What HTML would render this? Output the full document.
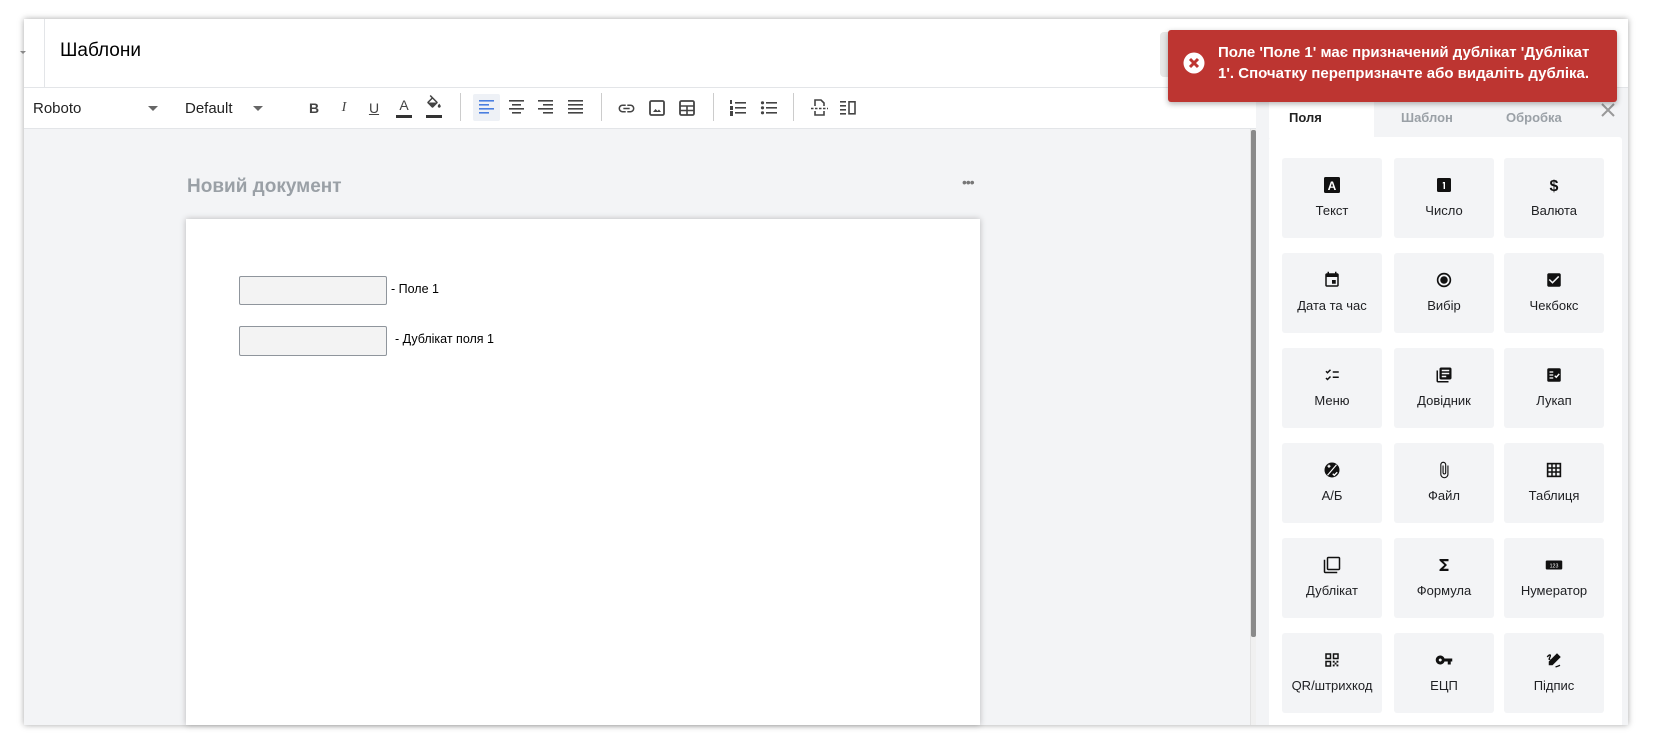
<!DOCTYPE html>
<html><head><meta charset="utf-8"><style>
*{box-sizing:border-box;margin:0;padding:0}
body{width:1654px;height:745px;background:#fff;font-family:"Liberation Sans","DejaVu Sans",sans-serif;position:relative;overflow:hidden;color:#202124}
.abs{position:absolute}
#frame{left:24px;top:19px;width:1604px;height:706px;background:#fff;box-shadow:0 0 6px rgba(0,0,0,.35);overflow:hidden}
.tb{position:absolute;top:99px;height:18px;display:flex;align-items:center;justify-content:center;width:20px;font-size:14px;color:#444}
.sep{position:absolute;top:93px;width:1px;height:28px;background:#ccc}
.tile{position:absolute;width:100px;height:80px;background:#f3f4f6;border-radius:3px;text-align:center}
.tile svg{position:absolute;left:41px;top:18px;width:18px;height:18px}
.tile span{position:absolute;left:0;right:0;top:45px;font-size:13px;color:#202124}
</style></head><body>
<div id="frame" class="abs"></div>
<!-- header -->
<div class="abs" style="left:24px;top:19px;width:1604px;height:69px;background:#fff;border-bottom:1px solid #e3e5e8"></div>
<div class="abs" style="left:20px;top:51px;width:0;height:0;border-left:3px solid transparent;border-right:3px solid transparent;border-top:3px solid #888"></div>
<div class="abs" style="left:44px;top:19px;width:1px;height:69px;background:#e3e5e8"></div>
<div class="abs" style="left:60px;top:40px;font-size:19px;color:#000">Шаблони</div>
<div class="abs" style="left:1160px;top:32px;width:70px;height:45px;background:#e8e8e8;border-radius:4px"></div>
<!-- toolbar -->
<div class="abs" style="left:24px;top:88px;width:1232px;height:41px;background:#fff;border-bottom:1px solid #e3e5e8"></div>
<div class="abs" style="left:33px;top:100px;font-size:15px;color:#222">Roboto</div>
<div class="abs" style="left:148px;top:106px;border-left:5px solid transparent;border-right:5px solid transparent;border-top:5px solid #666"></div>
<div class="abs" style="left:185px;top:100px;font-size:15px;color:#222">Default</div>
<div class="abs" style="left:253px;top:106px;border-left:5px solid transparent;border-right:5px solid transparent;border-top:5px solid #666"></div>
<div class="tb" style="left:304px;font-weight:bold">B</div>
<div class="tb" style="left:334px;font-style:italic;font-family:'Liberation Serif',serif">I</div>
<div class="tb" style="left:364px;text-decoration:underline">U</div>
<div class="tb" style="left:394px;top:96px">A</div><div class="abs" style="left:396px;top:115px;width:16px;height:3px;background:#333"></div>
<svg class="abs" style="left:424px;top:95px" width="20" height="18" viewBox="0 0 24 24"><path fill="#444" d="M16.56 8.94L7.62 0 6.21 1.41l2.38 2.38-5.15 5.15c-.59.59-.59 1.54 0 2.12l5.5 5.5c.29.29.68.44 1.06.44s.77-.15 1.06-.44l5.5-5.5c.59-.58.59-1.53 0-2.12zM5.21 10L10 5.21 14.79 10H5.21zM19 11.5s-2 2.17-2 3.5c0 1.1.9 2 2 2s2-.9 2-2c0-1.33-2-3.5-2-3.5z"/></svg>
<div class="abs" style="left:426px;top:115px;width:16px;height:3px;background:#333"></div>
<div class="sep" style="left:460px"></div>
<div class="abs" style="left:473px;top:94px;width:27px;height:27px;background:#eef1f6;border-radius:2px"></div>
<svg class="abs" style="left:479px;top:100px" width="15" height="14"><g fill="#4a7fe0"><rect y="0" width="15" height="1.6"/><rect y="4" width="10" height="1.6"/><rect y="8" width="15" height="1.6"/><rect y="12" width="10" height="1.6"/></g></svg>
<svg class="abs" style="left:509px;top:100px" width="15" height="14"><g fill="#444"><rect y="0" width="15" height="1.6"/><rect x="3" y="4" width="9" height="1.6"/><rect y="8" width="15" height="1.6"/><rect x="3" y="12" width="9" height="1.6"/></g></svg>
<svg class="abs" style="left:538px;top:100px" width="15" height="14"><g fill="#444"><rect y="0" width="15" height="1.6"/><rect x="5" y="4" width="10" height="1.6"/><rect y="8" width="15" height="1.6"/><rect x="5" y="12" width="10" height="1.6"/></g></svg>
<svg class="abs" style="left:568px;top:100px" width="15" height="14"><g fill="#444"><rect y="0" width="15" height="1.6"/><rect y="4" width="15" height="1.6"/><rect y="8" width="15" height="1.6"/><rect y="12" width="15" height="1.6"/></g></svg>
<div class="sep" style="left:601px"></div>
<svg class="abs" style="left:617px;top:99px" width="19" height="19" viewBox="0 0 24 24"><path fill="#444" d="M3.9 12c0-1.71 1.39-3.1 3.1-3.1h4V7H7c-2.76 0-5 2.24-5 5s2.24 5 5 5h4v-1.9H7c-1.71 0-3.1-1.39-3.1-3.1zM8 13h8v-2H8v2zm9-6h-4v1.9h4c1.71 0 3.1 1.39 3.1 3.1s-1.39 3.1-3.1 3.1h-4V17h4c2.76 0 5-2.24 5-5s-2.24-5-5-5z"/></svg>
<svg class="abs" style="left:648px;top:99px" width="18" height="18" viewBox="0 0 18 18"><rect x="2" y="2" width="14" height="14" rx="1.5" fill="none" stroke="#444" stroke-width="1.8"/><path d="M5 13l2.5-3 2 2 1.5-1.5 2 2.5z" fill="#444"/></svg>
<svg class="abs" style="left:678px;top:99px" width="18" height="18" viewBox="0 0 18 18"><rect x="2" y="2" width="14" height="14" rx="1.5" fill="none" stroke="#444" stroke-width="1.8"/><path d="M2 7h14M2 11.5h14M9 7v9" stroke="#444" stroke-width="1.6"/></svg>
<div class="sep" style="left:713px"></div>
<svg class="abs" style="left:729px;top:99px" width="18" height="18" viewBox="0 0 18 18"><g fill="#444"><rect x="6" y="3" width="11" height="1.6"/><rect x="6" y="8" width="11" height="1.6"/><rect x="6" y="13" width="11" height="1.6"/><rect x="1" y="1" width="2" height="4"/><rect x="1" y="7" width="3" height="4"/><rect x="1" y="12" width="3" height="5"/></g></svg>
<svg class="abs" style="left:760px;top:99px" width="18" height="18" viewBox="0 0 18 18"><g fill="#444"><circle cx="2.5" cy="3.8" r="1.6"/><circle cx="2.5" cy="8.8" r="1.6"/><circle cx="2.5" cy="13.8" r="1.6"/><rect x="6" y="3" width="11" height="1.6"/><rect x="6" y="8" width="11" height="1.6"/><rect x="6" y="13" width="11" height="1.6"/></g></svg>
<div class="sep" style="left:793px"></div>
<svg class="abs" style="left:810px;top:98px" width="19" height="20" viewBox="0 0 19 20"><path d="M5 8V2h6l3 3v3M5 13v4h9v-4" fill="none" stroke="#444" stroke-width="1.6"/><path d="M1 10.5h17" stroke="#444" stroke-width="1.5" stroke-dasharray="2.5 1.5"/></svg>
<svg class="abs" style="left:840px;top:100px" width="17" height="15" viewBox="0 0 17 15"><g fill="#444"><rect y="1" width="6" height="1.6"/><rect y="5" width="6" height="1.6"/><rect y="9" width="6" height="1.6"/><rect y="13" width="6" height="1.6"/></g><rect x="9" y="1.8" width="6" height="12" fill="none" stroke="#444" stroke-width="1.6"/></svg>
<!-- doc area -->
<div class="abs" style="left:24px;top:129px;width:1226px;height:596px;background:#f3f4f6"></div>
<div class="abs" style="left:1250px;top:129px;width:6px;height:596px;background:#f0f0f0;border-left:1px solid #e2e2e2"></div>
<div class="abs" style="left:1251px;top:130px;width:5px;height:507px;background:#8a8a8a;border-radius:2px"></div>
<div class="abs" style="left:187px;top:176px;font-size:19px;font-weight:bold;color:#9aa0a6">Новий документ</div>
<div class="abs" style="left:962px;top:174px;font-size:14px;color:#777;letter-spacing:-1px">•••</div>
<div class="abs" style="left:186px;top:219px;width:794px;height:506px;background:#fff;box-shadow:0 0 6px rgba(0,0,0,.25)"></div>
<div class="abs" style="left:239px;top:276px;width:148px;height:29px;background:#f3f3f3;border:1px solid #8f959c;border-radius:2px"></div>
<div class="abs" style="left:391px;top:282px;font-size:12.5px;color:#000">- Поле 1</div>
<div class="abs" style="left:239px;top:326px;width:148px;height:30px;background:#f3f3f3;border:1px solid #8f959c;border-radius:2px"></div>
<div class="abs" style="left:395px;top:332px;font-size:12.5px;color:#000">- Дублікат поля 1</div>
<!-- right panel -->
<div class="abs" style="left:1256px;top:88px;width:372px;height:637px;background:#f3f4f6"></div>
<div class="abs" style="left:1269px;top:98px;width:105px;height:40px;background:#fff"></div>
<div class="abs" style="left:1269px;top:137px;width:353px;height:588px;background:#fff;border-radius:3px 3px 0 0"></div>
<div class="abs" style="left:1289px;top:110px;font-size:13px;font-weight:bold;color:#222">Поля</div>
<div class="abs" style="left:1401px;top:110px;font-size:13px;font-weight:bold;color:#9aa0a6">Шаблон</div>
<div class="abs" style="left:1506px;top:110px;font-size:13px;font-weight:bold;color:#9aa0a6">Обробка</div>
<svg class="abs" style="left:1600px;top:102px" width="16" height="16"><path d="M2 2l12 12M14 2L2 14" stroke="#999" stroke-width="2"/></svg>

<div class="tile" style="left:1282px;top:158px"><svg viewBox="0 0 18 18"><rect x="1" y="1" width="16" height="16" rx="1.5" fill="#111"/><text x="9" y="14" font-size="12" fill="#fff" text-anchor="middle" font-family="Liberation Sans" font-weight="bold">A</text></svg><span>Текст</span></div>
<div class="tile" style="left:1394px;top:158px"><svg viewBox="0 0 18 18"><rect x="2" y="2" width="14" height="14" rx="1.5" fill="#111"/><path d="M8 6h2v7H8.6V7.4H7.5z" fill="#fff"/></svg><span>Число</span></div>
<div class="tile" style="left:1504px;top:158px"><svg viewBox="0 0 18 18"><text x="9" y="15" font-size="16" fill="#111" text-anchor="middle" font-family="Liberation Sans" font-weight="bold">$</text></svg><span>Валюта</span></div>

<div class="tile" style="left:1282px;top:253px"><svg viewBox="0 0 24 24"><path fill="#111" d="M17 12h-5v5h5v-5zM16 1v2H8V1H6v2H5c-1.11 0-1.99.9-1.99 2L3 19c0 1.1.89 2 2 2h14c1.1 0 2-.9 2-2V5c0-1.1-.9-2-2-2h-1V1h-2zm3 18H5V8h14v11z"/></svg><span>Дата та час</span></div>
<div class="tile" style="left:1394px;top:253px"><svg viewBox="0 0 24 24"><circle cx="12" cy="12" r="8.5" fill="none" stroke="#111" stroke-width="2.2"/><circle cx="12" cy="12" r="5" fill="#111"/></svg><span>Вибір</span></div>
<div class="tile" style="left:1504px;top:253px"><svg viewBox="0 0 24 24"><path fill="#111" d="M19 3H5c-1.11 0-2 .9-2 2v14c0 1.1.89 2 2 2h14c1.11 0 2-.9 2-2V5c0-1.1-.89-2-2-2zm-9 14l-5-5 1.41-1.41L10 14.17l7.59-7.59L19 8l-9 9z"/></svg><span>Чекбокс</span></div>

<div class="tile" style="left:1282px;top:348px"><svg viewBox="0 0 24 24"><path d="M4 7l2 2 4-4M4 16l2 2 4-4" fill="none" stroke="#111" stroke-width="2"/><rect x="13" y="7" width="8" height="2" fill="#111"/><rect x="13" y="14" width="8" height="2" fill="#111"/></svg><span>Меню</span></div>
<div class="tile" style="left:1394px;top:348px"><svg viewBox="0 0 24 24"><path fill="#111" d="M4 6H2v14c0 1.1.9 2 2 2h14v-2H4V6zm16-4H8c-1.1 0-2 .9-2 2v12c0 1.1.9 2 2 2h12c1.1 0 2-.9 2-2V4c0-1.1-.9-2-2-2zm-1 9H9V9h10v2zm-4 4H9v-2h6v2zm4-8H9V5h10v2z"/></svg><span>Довідник</span></div>
<div class="tile" style="left:1504px;top:348px"><svg viewBox="0 0 24 24"><rect x="3" y="3" width="18" height="18" rx="2" fill="#111"/><path d="M6 8h5M6 12h5M6 16h5" stroke="#fff" stroke-width="1.6"/><path d="M13 13l2 2 4-4.5" stroke="#fff" stroke-width="1.8" fill="none"/></svg><span>Лукап</span></div>

<div class="tile" style="left:1282px;top:443px"><svg viewBox="0 0 24 24"><circle cx="12" cy="12" r="10" fill="#111"/><path d="M6 7h4M8 5v4M13 17l2 2 4-4" stroke="#fff" stroke-width="1.8" fill="none"/><path d="M18 5L6 19" stroke="#fff" stroke-width="1.5"/></svg><span>А/Б</span></div>
<div class="tile" style="left:1394px;top:443px"><svg viewBox="0 0 24 24"><path fill="#111" d="M16.5 6v11.5c0 2.21-1.79 4-4 4s-4-1.790-4-4V5c0-1.38 1.12-2.5 2.5-2.5s2.5 1.12 2.5 2.5v10.5c0 .55-.45 1-1 1s-1-.45-1-1V6H10v9.5c0 1.38 1.12 2.5 2.5 2.5s2.5-1.12 2.5-2.5V5c0-2.21-1.79-4-4-4S7 2.79 7 5v12.5c0 3.04 2.46 5.5 5.5 5.5s5.5-2.46 5.5-5.5V6h-1.5z"/></svg><span>Файл</span></div>
<div class="tile" style="left:1504px;top:443px"><svg viewBox="0 0 24 24"><rect x="3.5" y="3.5" width="17" height="17" fill="none" stroke="#111" stroke-width="2.2"/><path d="M3 9.3h18M3 14.7h18M9.3 3v18M14.7 3v18" stroke="#111" stroke-width="2"/></svg><span>Таблиця</span></div>

<div class="tile" style="left:1282px;top:538px"><svg viewBox="0 0 24 24"><path fill="#111" d="M3 5H1v16c0 1.1.9 2 2 2h16v-2H3V5zm18-4H7c-1.1 0-2 .9-2 2v14c0 1.1.9 2 2 2h14c1.1 0 2-.9 2-2V3c0-1.1-.9-2-2-2zm0 16H7V3h14v14z"/></svg><span>Дублікат</span></div>
<div class="tile" style="left:1394px;top:538px"><svg viewBox="0 0 24 24"><path fill="#111" d="M18 4H6v2l6.5 6L6 18v2h12v-3h-7l5-5-5-5h7z"/></svg><span>Формула</span></div>
<div class="tile" style="left:1504px;top:538px"><svg viewBox="0 0 24 24"><rect x="1" y="6" width="22" height="12" rx="1.5" fill="#111"/><text x="12" y="15" font-size="7" fill="#fff" text-anchor="middle" font-family="Liberation Sans">123</text></svg><span>Нумератор</span></div>

<div class="tile" style="left:1282px;top:633px"><svg viewBox="0 0 24 24"><g fill="none" stroke="#111" stroke-width="2"><rect x="4" y="4" width="6" height="6"/><rect x="14" y="4" width="6" height="6"/><rect x="4" y="14" width="6" height="6"/></g><g fill="#111"><rect x="13" y="13" width="2.5" height="2.5"/><rect x="18" y="13" width="2.5" height="2.5"/><rect x="15.5" y="15.5" width="2.5" height="2.5"/><rect x="13" y="18" width="2.5" height="2.5"/><rect x="18" y="18" width="2.5" height="2.5"/></g></svg><span>QR/штрихкод</span></div>
<div class="tile" style="left:1394px;top:633px"><svg viewBox="0 0 24 24"><path fill="#111" d="M12.65 10C11.83 7.67 9.61 6 7 6c-3.31 0-6 2.69-6 6s2.69 6 6 6c2.61 0 4.83-1.67 5.65-4H17v4h4v-4h2v-4H12.65zM7 14c-1.1 0-2-.9-2-2s.9-2 2-2 2 .9 2 2-.9 2-2 2z"/></svg><span>ЕЦП</span></div>
<div class="tile" style="left:1504px;top:633px"><svg viewBox="0 0 24 24"><path fill="#111" d="M16 3l5 5-11 11H5v-5z"/><path d="M3 8c2-3 5-4 4-1s-3 5 0 4" stroke="#111" stroke-width="1.8" fill="none"/><path d="M14 21c2 0 4-1 6-2" stroke="#111" stroke-width="1.8" fill="none"/></svg><span>Підпис</span></div>

<!-- toast -->
<div class="abs" style="left:1168px;top:30px;width:449px;height:72px;background:#bd3531;border-radius:3px;box-shadow:0 2px 6px rgba(0,0,0,.3)"></div>
<svg class="abs" style="left:1183px;top:52px" width="22" height="22" viewBox="0 0 22 22"><circle cx="11" cy="11" r="10.5" fill="#fff"/><path d="M7 7l8 8M15 7l-8 8" stroke="#bd3531" stroke-width="3"/></svg>
<div class="abs" style="left:1218px;top:42px;width:390px;font-size:15px;line-height:21px;font-weight:bold;color:#fff">Поле 'Поле 1' має призначений дублікат 'Дублікат 1'. Спочатку перепризначте або видаліть дубліка.</div>
</body></html>
